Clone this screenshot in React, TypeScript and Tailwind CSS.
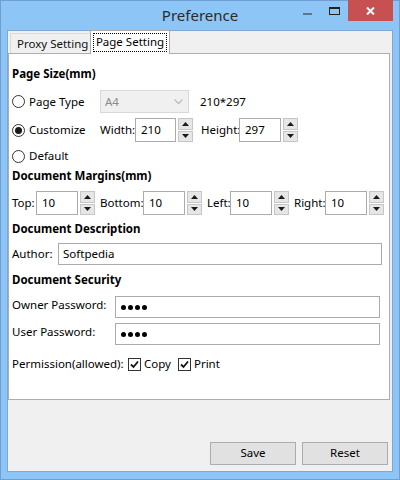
import React from 'react';

const font = { fontFamily: '"Noto Sans", "Liberation Sans", sans-serif' };

function Spinner() {
  return (
    <div className="flex h-[24px] w-[15px] flex-col gap-[1px]">
      <div className="flex flex-1 items-center justify-center border border-[#c6c6c6] bg-[#e6e6e6]">
        <svg width="7" height="4" viewBox="0 0 7 4">
          <path d="M0 4 L3.5 0 L7 4 Z" fill="#1a1a1a" />
        </svg>
      </div>
      <div className="flex flex-1 items-center justify-center border border-[#c6c6c6] bg-[#e6e6e6]">
        <svg width="7" height="4" viewBox="0 0 7 4">
          <path d="M0 0 L7 0 L3.5 4 Z" fill="#1a1a1a" />
        </svg>
      </div>
    </div>
  );
}

function NumBox({ value, width }: { value: string; width: string }) {
  return (
    <div className="flex items-center gap-[2px]">
      <div className={`${width} flex h-[24px] items-center border border-[#ababab] bg-white pl-[5px]`}>
        {value}
      </div>
      <Spinner />
    </div>
  );
}

function Radio({ checked, label }: { checked?: boolean; label: string }) {
  return (
    <div className="flex w-[88px] items-center gap-[4px]">
      <div className="flex h-[13px] w-[13px] items-center justify-center rounded-full border border-[#333] bg-white">
        {checked && <div className="h-[7px] w-[7px] rounded-full bg-[#1a1a1a]" />}
      </div>
      <span>{label}</span>
    </div>
  );
}

function Check({ label }: { label: string }) {
  return (
    <div className="flex items-center gap-[3px]">
      <div className="flex h-[13px] w-[13px] items-center justify-center border border-[#333] bg-white">
        <svg width="9" height="9" viewBox="0 0 9 9">
          <path d="M1 4.5 L3.5 7 L8 1.5" fill="none" stroke="#111" strokeWidth="1.8" />
        </svg>
      </div>
      <span>{label}</span>
    </div>
  );
}

function Dots() {
  return (
    <div className="flex gap-[2px]">
      <div className="h-[5px] w-[5px] rounded-full bg-black" />
      <div className="h-[5px] w-[5px] rounded-full bg-black" />
      <div className="h-[5px] w-[5px] rounded-full bg-black" />
      <div className="h-[5px] w-[5px] rounded-full bg-black" />
    </div>
  );
}

export default function App() {
  return (
    <div
      className="flex h-[480px] w-[400px] flex-col border border-[#6f9fd0] bg-[#8cc5f6] text-[11.5px] leading-none text-black"
      style={font}
    >
      {/* Title bar */}
      <div className="relative flex h-[29px] shrink-0 items-center justify-center">
        <span className="pb-[1px] text-[15px] text-[#2b2b2b]">Preference</span>
        <div className="absolute right-[6px] top-[-1px] flex items-start">
          <div className="mr-[17px] mt-[13px] h-[2px] w-[9px] bg-[#5d7690]" />
          <div className="mr-[8px] mt-[7px] h-[8px] w-[11px] border border-t-2 border-[#222]" />
          <div className="flex h-[21px] w-[45px] items-center justify-center bg-[#c75050]">
            <svg width="9" height="8" viewBox="0 0 9 8">
              <path d="M1 0.5 L8 7.5 M8 0.5 L1 7.5" stroke="#fff" strokeWidth="2" />
            </svg>
          </div>
        </div>
      </div>

      {/* Client area */}
      <div className="mx-[6px] mb-[7px] flex flex-1 flex-col border border-[#7ea9d3] bg-[#f0f0f0]">
        {/* Tabs */}
        <div className="flex h-[22px] items-end pl-[2px]">
          <div className="flex h-[20px] w-[80px] items-center border-l border-t border-[#d9d9d9] bg-[#f0f0f0] pl-[6px] text-[#111]">
            Proxy Setting
          </div>
          <div className="relative z-10 -mb-px flex h-[24px] w-[80px] items-center justify-center border border-b-0 border-[#adadad] bg-white p-[2px]">
            <div className="flex h-full w-full items-center justify-center border border-dotted border-black pb-[1px]">
              Page Setting
            </div>
          </div>
        </div>

        {/* Panel */}
        <div className="mr-[2px] flex h-[347px] flex-col border border-[#adadad] bg-white pl-[3px]">
          <div className="mt-[12px] flex h-[16px] items-center font-bold">Page Size(mm)</div>

          <div className="mt-[8px] flex h-[23px] items-center">
            <Radio label="Page Type" />
            <div className="flex h-[23px] w-[89px] items-center justify-between border border-[#d9d9d9] bg-[#f0f0f0] pl-[4px] pr-[5px] text-[#8a8a8a]">
              <span>A4</span>
              <svg width="9" height="6" viewBox="0 0 9 6">
                <path d="M0.5 0.5 L4.5 4.5 L8.5 0.5" fill="none" stroke="#bdbdbd" strokeWidth="1.3" />
              </svg>
            </div>
            <span className="ml-[11px]">210*297</span>
          </div>

          <div className="mt-[5px] flex h-[24px] items-center">
            <Radio checked label="Customize" />
            <span className="w-[35px]">Width:</span>
            <NumBox value="210" width="w-[41px]" />
            <span className="ml-[8px] w-[38px]">Height:</span>
            <NumBox value="297" width="w-[42px]" />
          </div>

          <div className="mt-[6px] flex h-[16px] items-center">
            <Radio label="Default" />
          </div>

          <div className="mt-[4px] flex h-[16px] items-center font-bold">Document Margins(mm)</div>

          <div className="mt-[7px] flex h-[24px] items-center">
            <span className="w-[24px]">Top:</span>
            <NumBox value="10" width="w-[42px]" />
            <span className="ml-[5px] w-[43px]">Bottom:</span>
            <NumBox value="10" width="w-[42px]" />
            <span className="ml-[5px] w-[23px]">Left:</span>
            <NumBox value="10" width="w-[42px]" />
            <span className="ml-[5px] w-[31px]">Right:</span>
            <NumBox value="10" width="w-[42px]" />
          </div>

          <div className="mt-[6px] flex h-[16px] items-center font-bold">Document Description</div>

          <div className="mt-[6px] flex h-[22px] items-center">
            <span className="w-[46px]">Author:</span>
            <div className="flex h-[22px] w-[324px] items-center border border-[#ababab] pl-[4px]">Softpedia</div>
          </div>

          <div className="mt-[7px] flex h-[16px] items-center font-bold">Document Security</div>

          <div className="mt-[8px] flex h-[22px] items-center">
            <span className="mb-[5px] w-[103px]">Owner Password:</span>
            <div className="flex h-[22px] w-[265px] items-center border border-[#ababab] pl-[5px]">
              <Dots />
            </div>
          </div>

          <div className="mt-[5px] flex h-[22px] items-center">
            <span className="mb-[5px] w-[103px]">User Password:</span>
            <div className="flex h-[22px] w-[265px] items-center border border-[#ababab] pl-[5px]">
              <Dots />
            </div>
          </div>

          <div className="mt-[11px] flex h-[16px] items-center">
            <span className="w-[116px]">Permission(allowed):</span>
            <Check label="Copy" />
            <div className="ml-[7px]">
              <Check label="Print" />
            </div>
          </div>
        </div>

        {/* Buttons */}
        <div className="mt-auto mb-[6px] mr-[4px] flex justify-end gap-[6px]">
          <button className="h-[23px] w-[86px] border border-[#adadad] bg-[#e1e1e1] pb-[1px]">Save</button>
          <button className="h-[23px] w-[86px] border border-[#adadad] bg-[#e1e1e1] pb-[1px]">Reset</button>
        </div>
      </div>
    </div>
  );
}
